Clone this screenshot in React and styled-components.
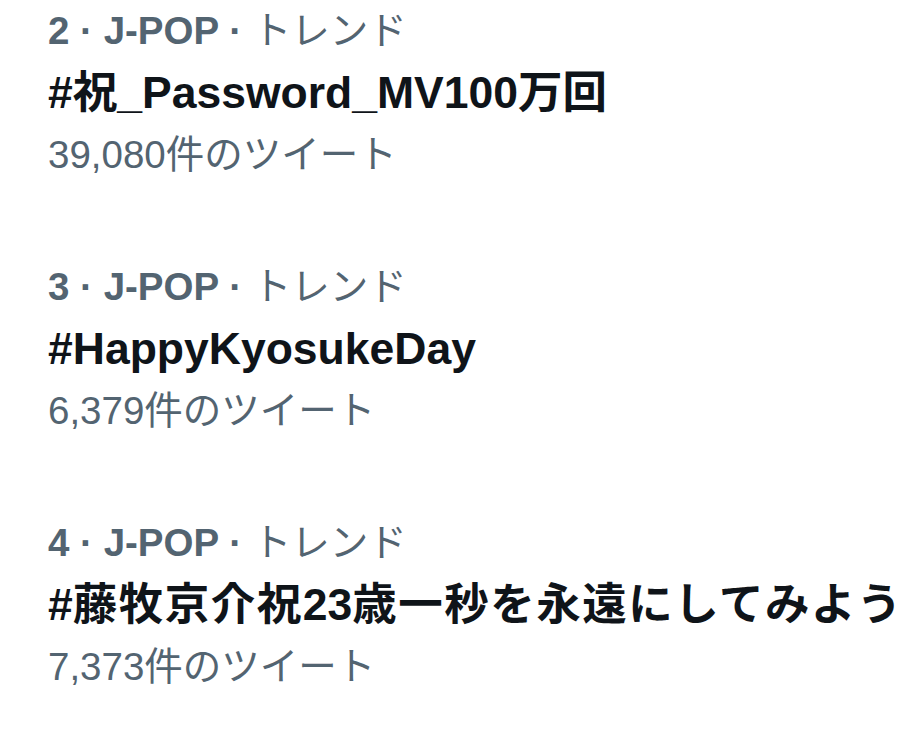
import React from "react";
import styled, { createGlobalStyle } from "styled-components";

const Global = createGlobalStyle`
  html, body { margin: 0; padding: 0; background: #ffffff; }
  body { font-family: "Liberation Sans", "Noto Sans CJK JP", sans-serif; }
`;

const List = styled.div`
  display: flex;
  flex-direction: column;
  gap: 70px;
  padding: 0 0 0 48px;
  width: 921px;
  height: 730px;
  box-sizing: border-box;
  overflow: hidden;
  background: #fff;
`;

const Item = styled.div`
  display: flex;
  flex-direction: column;
`;

const Meta = styled.div`
  font-size: 38.5px;
  line-height: 62px;
  height: 62px;
  color: #536471;
  font-weight: 700;
  white-space: nowrap;
`;

const MetaLight = styled.span`
  font-weight: 400;
`;

const Title = styled.div`
  font-size: 44.5px;
  line-height: 62px;
  height: 62px;
  color: #0f1419;
  font-weight: 700;
  white-space: nowrap;
`;

const Cjk = styled.span`
  letter-spacing: 1.5px;
`;

const Count = styled.div`
  font-size: 38.5px;
  line-height: 62px;
  height: 62px;
  color: #536471;
  font-weight: 400;
  white-space: nowrap;
`;

const trends = [
  { rank: 2, title: ["#祝_Password_MV100万回"], count: "39,080" },
  { rank: 3, title: ["#HappyKyosukeDay"], count: "6,379" },
  { rank: 4, title: ["#", "藤牧京介祝", "23", "歳一秒を永遠にしてみよう"], count: "7,373" },
];

export default function App() {
  return (
    <>
      <Global />
      <List>
        {trends.map((t) => (
          <Item key={t.rank}>
            <Meta>
              {t.rank} · J-POP · <MetaLight>トレンド</MetaLight>
            </Meta>
            <Title>
              {t.title.map((part, i) =>
                i % 2 === 1 ? <Cjk key={i}>{part}</Cjk> : <React.Fragment key={i}>{part}</React.Fragment>
              )}
            </Title>
            <Count>{t.count}件のツイート</Count>
          </Item>
        ))}
      </List>
    </>
  );
}
